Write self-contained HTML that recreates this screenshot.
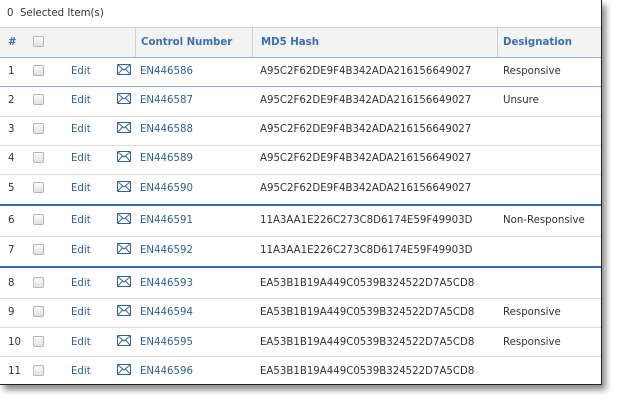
<!DOCTYPE html>
<html><head><style>
body{margin:0;width:617px;height:400px;background:#fff;position:relative;overflow:hidden;font-family:"DejaVu Sans","Liberation Sans",sans-serif;font-size:10.2px;color:#333}
.frame{position:absolute;left:0;top:0;width:601px;height:384px;border:1px solid #222;border-left:none;border-top:none;box-shadow:4px 5px 6px rgba(0,0,0,.45);background:#fff}
.t{position:absolute;white-space:nowrap;line-height:12px}
.hdr{position:absolute;left:0;top:27px;width:601px;height:29px;background:#f3f3f3;border-top:1px solid #d8d8d8;border-bottom:1px solid #d8d8d8}
.vl{position:absolute;top:27px;width:1px;height:30px;background:#d0d0d0}
.h{color:#3b6fb6;font-weight:bold}
.l{position:absolute;left:0;width:601px;height:1px;background:#dcdcdc}
.cb{position:absolute;width:9px;height:9px;border:1px solid #b5b5b5;border-radius:2px;background:linear-gradient(#fafafa,#e2e2e2)}
.lk{color:#2f5e9e}
.ic{position:absolute;width:12px;height:9px;border:1.5px solid #2f62a8;border-radius:1px}
</style></head><body>
<div class="frame"></div>
<div class="t" style="left:7px;top:8px">0&nbsp; Selected Item(s)</div>
<div class="hdr"></div>
<div class="vl" style="left:135px"></div>
<div class="vl" style="left:252px"></div>
<div class="vl" style="left:497px"></div>
<div class="t h" style="left:8px;top:37px">#</div>
<div class="cb" style="left:33px;top:36px"></div>
<div class="t h" style="left:141px;top:37px">Control Number</div>
<div class="t h" style="left:261px;top:37px">MD5 Hash</div>
<div class="t h" style="left:503px;top:37px">Designation</div>
<div id="rows"></div>
<script>
var ys=[71,100,129,158,188,220,250,283,312,342,371];
var hash=["A95C2F62DE9F4B342ADA216156649027","A95C2F62DE9F4B342ADA216156649027","A95C2F62DE9F4B342ADA216156649027","A95C2F62DE9F4B342ADA216156649027","A95C2F62DE9F4B342ADA216156649027","11A3AA1E226C273C8D6174E59F49903D","11A3AA1E226C273C8D6174E59F49903D","EA53B1B19A449C0539B324522D7A5CD8","EA53B1B19A449C0539B324522D7A5CD8","EA53B1B19A449C0539B324522D7A5CD8","EA53B1B19A449C0539B324522D7A5CD8"];
var des=["Responsive","Unsure","","","","Non-Responsive","","","Responsive","Responsive",""];
var h="";
for(var i=0;i<11;i++){var y=ys[i]-6;var ty=y+1;
h+='<div class="t" style="left:8px;top:'+ty+'px">'+(i+1)+'</div>';
h+='<div class="cb" style="left:33px;top:'+(y)+'px"></div>';
h+='<div class="t lk" style="left:71px;top:'+ty+'px">Edit</div>';
h+='<div class="ic" style="left:117px;top:'+(y-1)+'px"><svg width="12" height="9" style="position:absolute;left:0;top:0"><path d="M0 0L6 5L12 0M0 9L4.5 4M12 9L7.5 4" stroke="#2f62a8" fill="none" stroke-width="1"/></svg></div>';
h+='<div class="t lk" style="left:140px;top:'+ty+'px">EN4465'+(86+i)+'</div>';
h+='<div class="t" style="left:260px;top:'+ty+'px">'+hash[i]+'</div>';
h+='<div class="t" style="left:503px;top:'+ty+'px">'+des[i]+'</div>';}
var ls=[[57,'#8fb3e6',1],[86,'#8fb3e6',1],[116,'#dcdcdc',1],[145,'#dcdcdc',1],[174,'#dcdcdc',1],[204,'#3669b5',2],[236,'#dcdcdc',1],[266,'#3669b5',2],[298,'#dcdcdc',1],[327,'#dcdcdc',1],[356,'#dcdcdc',1]];
ls.forEach(function(a){h+='<div class="l" style="top:'+a[0]+'px;background:'+a[1]+';height:'+a[2]+'px"></div>';});
document.getElementById('rows').innerHTML=h;
</script>
</body></html>
